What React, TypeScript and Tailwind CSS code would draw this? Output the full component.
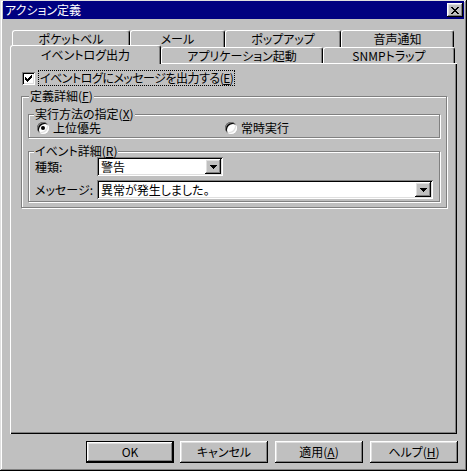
import type { ReactNode } from 'react';

const raised =
  'shadow-[inset_-1px_-1px_#000,inset_1px_1px_#fff,inset_-2px_-2px_#808080,inset_2px_2px_#dfdfdf]';
const sunken =
  'shadow-[inset_1px_1px_#808080,inset_-1px_-1px_#fff,inset_2px_2px_#000,inset_-2px_-2px_#dfdfdf]';
const etched = 'border border-[#808080] shadow-[inset_1px_1px_#fff,1px_1px_#fff]';

const CHECK = ['......X', '.....XX', 'X...XXX', 'XX.XXX.', 'XXXXX..', '.XXX...', '..X....'];
const CLOSE = ['XX....XX', '.XX..XX.', '..XXXX..', '...XX...', '..XXXX..', '.XX..XX.', 'XX....XX'];
const ARROW = ['XXXXXXX', '.XXXXX.', '..XXX..', '...X...'];

function Glyph({ rows }: { rows: string[] }) {
  return (
    <svg width={rows[0].length} height={rows.length} className="block" shapeRendering="crispEdges">
      {rows.flatMap((r, y) =>
        r.split('').map((c, x) =>
          c === 'X' ? <rect key={`${x}-${y}`} x={x} y={y} width={1} height={1} fill="#000" /> : null
        )
      )}
    </svg>
  );
}

function Tab({ w, children, selected }: { w: string; children: ReactNode; selected?: boolean }) {
  return (
    <div
      className={`${w} ${
        selected ? 'relative z-10 -mt-[2px] h-[19px] pb-[1px]' : 'h-full'
      } flex items-center justify-center bg-[#c0c0c0] border-t border-l border-r border-t-white border-l-white border-r-black rounded-t-[3px] shadow-[inset_-1px_0_#808080]`}
    >
      {children}
    </div>
  );
}

// etched group box, caption sits over the top line
function Group({
  label,
  children,
  className,
  labelLeft,
}: {
  label: ReactNode;
  children: ReactNode;
  className: string;
  labelLeft: string;
}) {
  return (
    <div className={`relative pt-[5px] ${etched} ${className}`}>
      <span className={`absolute -top-[7px] ${labelLeft} bg-[#c0c0c0] px-[1px] leading-[12px]`}>{label}</span>
      {children}
    </div>
  );
}

function Radio({ checked }: { checked?: boolean }) {
  return (
    <span className="flex w-[12px] h-[12px] shrink-0 items-center justify-center rounded-full bg-white shadow-[inset_1px_1px_#808080,inset_-1px_-1px_#fff,inset_2px_2px_#000,inset_-2px_-2px_#dfdfdf]">
      {checked && <span className="w-[4px] h-[4px] rounded-full bg-black" />}
    </span>
  );
}

function Combo({ w, value }: { w: string; value: string }) {
  return (
    <div className={`${w} h-[19px] flex items-center bg-white p-[2px] ${sunken}`}>
      <span className="flex-1 pl-[2px] leading-[14px]">{value}</span>
      <span className={`flex w-[16px] h-[15px] items-center justify-center bg-[#c0c0c0] ${raised}`}>
        <Glyph rows={ARROW} />
      </span>
    </div>
  );
}

function Button({ children, isDefault, className }: { children: ReactNode; isDefault?: boolean; className?: string }) {
  return (
    <div className={`w-[88px] h-[22px] ${isDefault ? 'border border-black' : ''} ${className ?? ''}`}>
      <div className={`flex h-full items-center justify-center bg-[#c0c0c0] ${raised}`}>{children}</div>
    </div>
  );
}

export default function App() {
  return (
    <div className="w-[467px] h-[471px] bg-[#c0c0c0] px-[3px] pt-[1px] text-[12px] leading-[14px] text-black font-['Noto_Sans_CJK_JP','Noto_Sans_CJK_SC',sans-serif] [font-feature-settings:'palt'] shadow-[inset_-1px_-1px_#000,inset_1px_1px_#dfdfdf,inset_-2px_-2px_#808080,inset_2px_2px_#fff]">
      <div className="flex h-[18px] items-center justify-between bg-[#000080] pl-[2px] pr-[1px]">
        <span className="text-white">アクション定義</span>
        <span className={`flex w-[16px] h-[14px] items-center justify-center bg-[#c0c0c0] ${raised}`}>
          <Glyph rows={CLOSE} />
        </span>
      </div>

      <div className="ml-[7px] mt-[11px]">
        <div className="flex h-[17px] ml-[2px]">
          <Tab w="w-[118px]">ポケットベル</Tab>
          <Tab w="w-[95px]">メール</Tab>
          <Tab w="w-[116px]">ポップアップ</Tab>
          <Tab w="w-[113px]">音声通知</Tab>
        </div>
        <div className="flex h-[16px]">
          <Tab w="w-[151px]" selected>
            イベントログ出力
          </Tab>
          <Tab w="w-[162px]">アプリケーション起動</Tab>
          <Tab w="w-[132px]">SNMPトラップ</Tab>
        </div>

        <div className="w-[447px] h-[371px] pt-[7px] shadow-[inset_1px_1px_#fff,inset_-1px_-1px_#000,inset_-2px_-2px_#808080]">
          <div className="flex h-[16px] items-end ml-[12px]">
            <span className={`flex w-[13px] h-[13px] mb-[1px] items-center justify-center bg-white ${sunken}`}>
              <Glyph rows={CHECK} />
            </span>
            <span className="ml-[3px] h-[16px] border border-dotted border-black px-[1px] leading-[14px] tracking-[-0.5px]">
              イベントログにメッセージを出力する(<span className="underline">E</span>)
            </span>
          </div>

          <Group
            className="mt-[10px] ml-[11px] w-[426px] pb-[5px]"
            labelLeft="left-[7px]"
            label={
              <>
                定義詳細(<span className="underline">F</span>)
              </>
            }
          >
            <Group
              className="mt-[12px] ml-[6px] w-[412px] pb-[2px]"
              labelLeft="left-[5px]"
              label={
                <>
                  実行方法の指定(<span className="underline">X</span>)
                </>
              }
            >
              <div className="flex h-[15px] items-center pt-[1px] pl-[8px] leading-[12px]">
                <div className="flex w-[188px] items-center gap-[4px]">
                  <Radio checked />
                  <span>上位優先</span>
                </div>
                <div className="flex items-center gap-[4px]">
                  <Radio />
                  <span>常時実行</span>
                </div>
              </div>
            </Group>

            <Group
              className="mt-[13px] ml-[6px] w-[412px] pb-[2px]"
              labelLeft="left-[5px]"
              label={
                <>
                  イベント詳細(<span className="underline">R</span>)
                </>
              }
            >
              <div className="flex flex-col gap-[4px] pl-[6px]">
                <div className="flex items-center">
                  <span className="w-[62px]">種類:</span>
                  <Combo w="w-[126px]" value="警告" />
                </div>
                <div className="flex items-center">
                  <span className="w-[62px]">メッセージ:</span>
                  <Combo w="w-[336px]" value="異常が発生しました。" />
                </div>
              </div>
            </Group>
          </Group>
        </div>
      </div>

      <div className="flex mt-[7px]">
        <Button isDefault className="ml-[83px]">
          OK
        </Button>
        <Button className="ml-[6px]">キャンセル</Button>
        <Button className="ml-[7px]">
          適用(<span className="underline">A</span>)
        </Button>
        <Button className="ml-[7px]">
          ヘルプ(<span className="underline">H</span>)
        </Button>
      </div>
    </div>
  );
}
